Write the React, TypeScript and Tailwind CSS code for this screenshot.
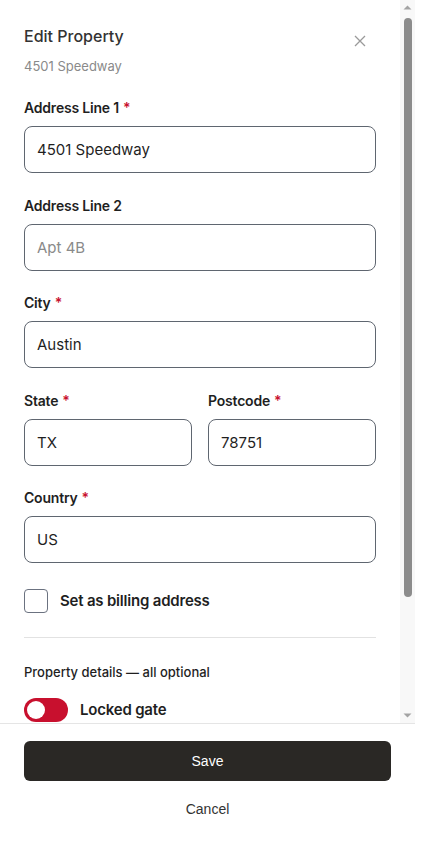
import React, { useState } from 'react';

const font = { fontFamily: 'Inter, "Noto Sans", sans-serif' };

function Label({ text, required }: { text: string; required?: boolean }) {
  return (
    <label className="block text-[14px] leading-5 font-semibold text-[#1f1f1f] mb-2 tracking-[-0.2px]">
      {text}
      {required && <span className="text-[#c8102e] ml-1">*</span>}
    </label>
  );
}

function Field({ label, value, placeholder, required }: { label: string; value?: string; placeholder?: string; required?: boolean }) {
  return (
    <div className="flex flex-col">
      <Label text={label} required={required} />
      <input
        defaultValue={value}
        placeholder={placeholder}
        className="w-full h-[47px] px-3 rounded-lg border border-[#5f6670] text-[15px] text-[#1f1f1f] placeholder:text-[#8a8a8a] bg-white outline-none"
      />
    </div>
  );
}

function Toggle({ label }: { label: string }) {
  return (
    <div className="flex items-center gap-3">
      <div className="w-11 h-6 rounded-full p-[3px] flex bg-[#c8102e]">
        <div className="w-[18px] h-[18px] rounded-full bg-white" />
      </div>
      <span className="text-[15px] font-semibold text-[#1f1f1f] tracking-[-0.2px]">{label}</span>
    </div>
  );
}

function ScrollRail() {
  return (
    <div className="w-[15px] shrink-0 bg-[#f8f8f8] flex flex-col items-center">
      <svg width="9" height="15" viewBox="0 0 9 15" className="shrink-0">
        <path d="M0.5 9.5L4.5 5.5L8.5 9.5Z" fill="#a3a3a3" />
      </svg>
      <div className="w-2 mt-[3px] h-[579px] rounded-full bg-[#8c8c8c]" />
      <div className="flex-1" />
      <svg width="9" height="15" viewBox="0 0 9 15" className="shrink-0">
        <path d="M0.5 5.5L4.5 9.5L8.5 5.5Z" fill="#a3a3a3" />
      </svg>
    </div>
  );
}

export default function App() {
  const [billing, setBilling] = useState(false);

  return (
    <div className="w-[415px] h-[845px] flex flex-col bg-white" style={font}>
      <div className="flex-1 min-h-0 flex">
        <div className="flex-1 overflow-hidden">
          <div className="px-6 pt-6">
            <div className="flex items-start justify-between">
              <div>
                <h2 className="text-[16px] leading-6 font-medium text-[#333]">Edit Property</h2>
                <p className="mt-2 text-[13px] leading-5 text-[#8a8a8a]">4501 Speedway</p>
              </div>
              <button className="mt-[11px] mr-[10px] text-[#9a9a9a]">
                <svg width="12" height="12" viewBox="0 0 12 12" stroke="currentColor" strokeWidth="1.3" fill="none">
                  <path d="M1 1l10 10M11 1L1 11" />
                </svg>
              </button>
            </div>

            <div className="mt-[22px] flex flex-col gap-[22.5px]">
              <Field label="Address Line 1" value="4501 Speedway" required />
              <Field label="Address Line 2" placeholder="Apt 4B" />
              <Field label="City" value="Austin" required />
              <div className="grid grid-cols-2 gap-4">
                <Field label="State" value="TX" required />
                <Field label="Postcode" value="78751" required />
              </div>
              <Field label="Country" value="US" required />
            </div>

            <label className="mt-[26px] flex items-center gap-3 cursor-pointer">
              <input type="checkbox" checked={billing} onChange={() => setBilling(!billing)} className="sr-only" />
              <span className="w-6 h-6 rounded border border-[#6b7280] bg-white" />
              <span className="text-[15px] font-semibold text-[#1f1f1f] tracking-[-0.2px]">Set as billing address</span>
            </label>

            <div className="mt-6 border-t border-[#e2e2e2]" />

            <p className="mt-6 text-[13px] leading-5 font-medium text-[#1f1f1f]">Property details — all optional</p>

            <div className="mt-4 flex flex-col gap-4">
              <Toggle label="Locked gate" />
            </div>
          </div>
        </div>
        <ScrollRail />
      </div>

      <div className="border-t border-[#e5e5e5] px-6 pt-[17px] pb-4 flex flex-col gap-2" style={{ fontFamily: '"Liberation Sans", Arial, sans-serif' }}>
        <button className="h-10 w-full flex items-center justify-center rounded-md bg-[#2a2825] text-white text-[14px]">Save</button>
        <button className="h-10 w-full flex items-center justify-center text-[14px] text-[#333]">Cancel</button>
      </div>
    </div>
  );
}
